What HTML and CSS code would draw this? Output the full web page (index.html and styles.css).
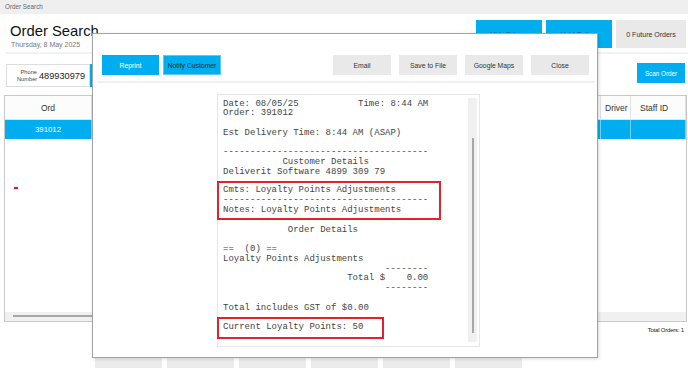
FILE: index.html
```html
<!DOCTYPE html>
<html lang="en">
<head>
    <meta charset="UTF-8">
    <meta name="viewport" content="width=device-width, initial-scale=1.0">
    <title>Order Search</title>
    <link rel="stylesheet" href="styles.css">
</head>
<body>
    <div class="titlebar">Order Search</div>

    <div class="header">
        <div class="heading">
            <h1>Order Search</h1>
            <p class="date">Thursday, 8 May 2025</p>
        </div>
        <div class="header-actions">
            <button class="btn btn-blue btn-tall">Hide Drivers</button>
            <button class="btn btn-blue btn-tall">Hold Orders</button>
            <button class="btn btn-grey btn-tall btn-wide">0 Future Orders</button>
        </div>
    </div>
    <div class="divider"></div>

    <div class="search-bar">
        <div class="phone-field">
            <label>Phone<br>Number</label>
            <span class="phone-value">489930979</span>
        </div>
        <button class="btn btn-blue search-btn">Search</button>
        <button class="btn btn-blue scan-btn">Scan Order</button>
    </div>

    <div class="orders-table">
        <div class="row row-head">
            <div class="cell cell-ord">Ord</div>
            <div class="cell cell-fill"></div>
            <div class="cell cell-driver">Driver</div>
            <div class="cell cell-staff">Staff ID</div>
        </div>
        <div class="row row-selected">
            <div class="cell cell-ord">391012</div>
            <div class="cell cell-fill"></div>
            <div class="cell cell-driver"></div>
            <div class="cell cell-staff"></div>
        </div>
        <div class="table-body">
            <span class="flag"></span>
        </div>
        <div class="hscroll"><span class="hscroll-thumb"></span></div>
    </div>
    <div class="totals">Total Orders: 1</div>

    <div class="footer-actions">
        <button class="btn btn-grey btn-foot">Print</button>
        <button class="btn btn-grey btn-foot">Refund</button>
        <button class="btn btn-grey btn-foot">Void</button>
        <button class="btn btn-grey btn-foot">Edit</button>
        <button class="btn btn-grey btn-foot">Recall</button>
        <button class="btn btn-grey btn-foot">Export</button>
    </div>

    <!-- reprint dialog -->
    <div class="dialog">
        <div class="dialog-toolbar">
            <button class="btn btn-blue btn-dlg btn-light">Reprint</button>
            <button class="btn btn-blue btn-dlg btn-focus">Notify Customer</button>
            <span class="spacer"></span>
            <button class="btn btn-grey btn-dlg">Email</button>
            <button class="btn btn-grey btn-dlg">Save to File</button>
            <button class="btn btn-grey btn-dlg">Google Maps</button>
            <button class="btn btn-grey btn-dlg">Close</button>
        </div>
        <div class="dialog-rule"></div>

        <div class="receipt">
            <div class="receipt-body">
<pre class="slip">Date: 08/05/25           Time: 8:44 AM
Order: 391012

Est Delivery Time: 8:44 AM (ASAP)

--------------------------------------
           Customer Details
Deliverit Software 4899 309 79</pre>
                <div class="mark mark-comments">
<pre class="slip">Cmts: Loyalty Points Adjustments
--------------------------------------
Notes: Loyalty Points Adjustments</pre>
                </div>
<pre class="slip">            Order Details

==  (0) ==
Loyalty Points Adjustments
                              --------
                       Total $    0.00
                              --------

Total includes GST of $0.00</pre>
                <div class="mark mark-points">
<pre class="slip">Current Loyalty Points: 50</pre>
                </div>
            </div>
            <div class="scroll-track">
                <div class="scroll-thumb"></div>
            </div>
        </div>
    </div>
</body>
</html>
```

FILE: styles.css
```css
:root {
    --blue: #00aeef;
    --grey-btn: #e9e9e9;
    --line: #d4d4d4;
    --text: #333;
}

* {
    margin: 0;
    padding: 0;
    box-sizing: border-box;
}

body {
    width: 688px;
    height: 385px;
    overflow: hidden;
    position: relative;
    background: #fff;
    color: var(--text);
    font-family: "Liberation Sans", Arial, sans-serif;
}

.titlebar {
    height: 14px;
    line-height: 14px;
    padding-left: 5px;
    background: #efefef;
    color: #666;
    font-size: 6.3px;
}

.header {
    height: 38px;
    padding: 6px 2px 0 10px;
    display: flex;
    justify-content: space-between;
}

.heading h1 {
    margin-top: 2px;
    font-size: 14.8px;
    line-height: 18px;
    font-weight: normal;
    color: #111;
}

.date {
    margin-left: 1px;
    font-size: 7px;
    line-height: 9px;
    color: #777;
}

.header-actions {
    display: flex;
    gap: 4px;
}

.btn {
    border: none;
    font-family: inherit;
    font-size: 6.8px;
    color: var(--text);
}

.btn-blue {
    background: var(--blue);
    color: #1f3f5c;
}

.btn-grey {
    background: var(--grey-btn);
}

.btn-tall {
    width: 66px;
    height: 28px;
}

.btn-wide {
    width: 70px;
    font-size: 7px;
}

.divider {
    height: 2px;
    margin-left: 6px;
    background: #f2f2f2;
}

.search-bar {
    margin-top: 9px;
    display: flex;
    align-items: flex-start;
}

.phone-field {
    width: 84px;
    height: 23px;
    margin: 1px 0 0 6px;
    padding-left: 10px;
    border: 1px solid #ddd;
    display: flex;
    align-items: center;
    gap: 2px;
}

.phone-field label {
    width: 20px;
    text-align: right;
    font-size: 5.7px;
    line-height: 7px;
    color: #444;
}

.phone-value {
    font-size: 9.2px;
    color: #222;
}

.search-btn {
    width: 60px;
    height: 23px;
    margin-top: 1px;
}

.scan-btn {
    width: 48px;
    height: 20px;
    margin-left: auto;
    margin-right: 3px;
    color: #fff;
    font-size: 6.3px;
}

.orders-table {
    height: 227px;
    margin: 8px 1px 0 4px;
    border: 1px solid #c8c8c8;
    display: flex;
    flex-direction: column;
}

.row {
    display: flex;
}

.row-head {
    height: 24px;
    background: #fcfcfc;
    border-bottom: 1px solid #e2e2e2;
    font-size: 8.5px;
}

.row-selected {
    height: 19px;
    background: var(--blue);
    color: #fff;
    font-size: 7.8px;
}

.cell {
    display: flex;
    align-items: center;
    border-right: 1px solid #e2e2e2;
}

.row-selected .cell {
    border-right-color: rgba(255, 255, 255, 0.45);
}

.cell-ord {
    width: 87px;
    justify-content: center;
}

.cell-fill {
    flex: 1;
}

.cell-driver {
    width: 30px;
    padding-left: 4px;
}

.cell-staff {
    width: 55px;
    padding-left: 9px;
}

.table-body {
    flex: 1;
}

.flag {
    display: block;
    width: 4px;
    height: 2px;
    margin: 48px 0 0 9px;
    background: #e4161d;
}

.hscroll {
    height: 9px;
    background: #f0f0f0;
    padding: 3px 0 0 8px;
}

.hscroll-thumb {
    display: block;
    width: 300px;
    height: 2px;
    background: #a6a6a6;
}

.totals {
    height: 10px;
    margin-top: 3px;
    padding-right: 4px;
    text-align: right;
    font-size: 6px;
    line-height: 10px;
    letter-spacing: -0.2px;
    color: #222;
}

.footer-actions {
    margin: 3px 0 0 95px;
    display: flex;
    gap: 5px;
}

.btn-foot {
    width: 67px;
    height: 30px;
    background: #ebebeb;
}

/* dialog */

.dialog {
    position: absolute;
    left: 92px;
    top: 33px;
    width: 506px;
    height: 325px;
    background: #fff;
    border: 1px solid #a2a2a2;
    box-shadow: 1px 1px 3px rgba(0, 0, 0, 0.15);
}

.dialog-toolbar {
    display: flex;
    gap: 4px;
    padding: 21px 8px 0 9px;
}

.spacer {
    flex: 1;
}

.btn-dlg {
    width: 58px;
    height: 20px;
}

.btn-dlg.btn-grey {
    margin-left: 4px;
}

.btn-dlg.btn-grey:first-of-type {
    margin-left: 0;
}

.btn-light {
    width: 57px;
    color: #fff;
}

.btn-focus {
    border: 1px solid #5cc8f4;
    color: #1c2b3a;
}

.dialog-rule {
    height: 2px;
    margin: 6px 2px 0 4px;
    background: #f0f0f0;
}

.receipt {
    width: 263px;
    height: 253px;
    margin: 11px 0 0 124px;
    border: 1px solid #e6e6e6;
    display: flex;
}

.receipt-body {
    flex: 1;
    padding-top: 4.5px;
}

.slip {
    padding-left: 5px;
    font-family: "Liberation Mono", "Courier New", monospace;
    font-size: 9px;
    line-height: 9.75px;
    color: #444;
}

.mark {
    margin: 3px 0 6px -1px;
    padding: 3.6px 4px 2.2px;
    border: 2px solid #e3222b;
}

.mark .slip {
    padding-left: 0;
}

.mark-comments {
    width: 224px;
}

.mark-points {
    width: 167px;
    margin-top: 4px;
    padding-bottom: 4px;
    margin-bottom: 0;
}

.scroll-track {
    width: 9px;
    margin: 3px 2px 4px 0;
    padding-top: 40px;
    background: #f0f0f0;
}

.scroll-thumb {
    width: 2px;
    height: 195px;
    margin-left: 4px;
    background: #a8a8a8;
}
```
